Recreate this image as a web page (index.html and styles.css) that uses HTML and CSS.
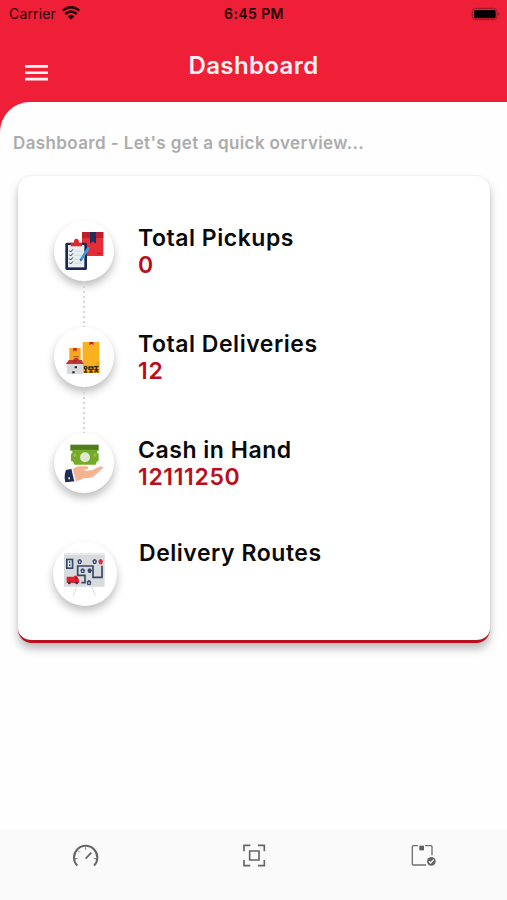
FILE: index.html
```html
<!DOCTYPE html>
<html lang="en">
<head>
<meta charset="utf-8">
<meta name="viewport" content="width=device-width, initial-scale=1">
<title>Dashboard</title>
<link rel="stylesheet" href="styles.css">
</head>
<body>
<header class="header">
  <div class="status">
    <div class="carrier"><span class="carrier-name">Carrier</span>
      <svg width="18" height="14" viewBox="0 0 54 42" fill="none" stroke="#250408" stroke-width="7.5"><path d="M2 14Q27-7 52 14M10 24Q27 9 44 24"/><path d="M17 31Q27 22 37 31L27 41Z" fill="#250408" stroke="none"/></svg>
    </div>
    <span class="time">6:45 PM</span>
    <svg class="battery" width="30" height="14" viewBox="0 0 90 42"><rect x="4" y="4" width="74" height="34" rx="10" fill="none" stroke="#9e1424" stroke-width="3"/><rect x="9" y="9" width="65" height="25" rx="5" fill="#080002"/><path d="M82 15q7 6 0 12z" fill="#9e1424"/></svg>
  </div>
  <div class="titlebar">
    <svg class="menu" width="23" height="16" viewBox="0 0 23 16" fill="#fff1f3"><path d="M0 0h23v2.7H0zM0 6.4h23v2.7H0zM0 12.8h23v2.7H0z"/></svg>
    <h1 class="title">Dashboard</h1>
  </div>
</header>
<main class="content">
  <p class="subtitle">Dashboard - Let's get a quick overview...</p>
  <section class="card">
    <div class="row">
      <div class="rail">
        <div class="disc"><svg viewBox="30 27 180 180">
          <path fill="#e52c37" d="M114 60h64v72h-64z"/><path fill="#b91f2c" d="M114 60h64v18h-64z"/><path fill="#252b5c" d="M138 60h18v35l-9-7-9 7z"/><path stroke="#9d2130" stroke-width="3" d="M159 124h13"/>
          <rect x="64" y="92" width="65" height="82" rx="5" fill="#1c2750"/><path fill="#e8edf0" d="M72 99h49v67H72z"/>
          <path fill="#e3262f" d="M80 103V92h10q-1-12 7-12t8 12h9v11z"/>
          <path d="m76 116 4 4 7-8m-11 16 4 4 7-8m-11 16 4 4 7-8m-11 16 4 4 7-8" fill="none" stroke="#28345c" stroke-width="3"/><path d="M91 118h22M91 130h22M91 142h18M91 154h22" stroke="#c7cdd1" stroke-width="2"/>
          <path d="m111 143 22-34" stroke="#3c9be0" stroke-width="8" stroke-linecap="round"/><path d="m108 149 1-9 5 3z" fill="#526577"/>
        </svg></div>
        <i class="dots"></i>
      </div>
      <div class="info"><h2 class="label">Total Pickups</h2><p class="value">0</p></div>
    </div>
    <div class="row">
      <div class="rail">
        <div class="disc"><svg viewBox="30 27 180 180">
          <path fill="#fbb022" d="M116 72h50v93h-50z"/><path fill="#f2a012" d="m166 128-38 37h38z"/><path fill="#c8202b" d="M136 72h12v9l-6-3-6 3z"/>
          <path fill="#f9a51d" d="M76 90h34v38H76z"/><path fill="#c8202b" d="M88 90h10v11l-5-4-5 4z"/><path stroke="#8b5a20" stroke-width="3" d="M88 116h16"/>
          <path fill="#d6dadd" d="M69 137h47v31H69z"/><path fill="#c83230" d="m65 138 10-12h12l5-6h9l4 6h8l6 12z"/><path fill="#a92b2d" d="M88 126h10v8H88z"/>
          <path fill="#252528" d="M92 145h7v6h-7zM85 160h7v6h-7z"/>
          <g fill="none" stroke="#322711" stroke-width="4"><circle cx="125" cy="149" r="4"/><path d="M125 153v9m-5 0h10m5-15h12v7h-12zm6 7v8m-5 0h10m4-16h14m-7 0v7m-6 2h12m-11 8q5-8 11 0"/></g>
        </svg></div>
        <i class="dots"></i>
      </div>
      <div class="info"><h2 class="label">Total Deliveries</h2><p class="value">12</p></div>
    </div>
    <div class="row">
      <div class="rail">
        <div class="disc"><svg viewBox="30 27 180 180">
          <path fill="#4d7d1d" d="M79 62h85v18H79z"/><path fill="#75aa29" d="M85 77h74v9q1 3 5 3v22q-7 1-9 11H91q-2-10-10-11V89q4 0 4-3z"/><circle cx="123" cy="100" r="15" fill="#dce9ce"/><path fill="#93bd55" d="m92 88 6 6-6 6-5-6zm61 0 5 6-5 6-6-6z"/>
          <path fill="#f4b393" d="M83 139q12-13 25-12h20q8 2 3 8-4 3-17 4 12 5 27 1l25-12q8-2 12 1-2 6-14 15l-14 13q-7 5-17 5-16-1-27 7l-15 4z"/><path d="M113 139q17 6 29 0" stroke="#dfa080" stroke-width="2" fill="none"/>
          <path fill="#1e2d55" d="m66 138 18-4 9 38-29 3q-5-19 2-37z"/><path fill="#f0f3f8" d="m82 134 4-1 10 38-5 2z"/><path fill="#e7edf2" d="M73 160h5v6h-5z"/>
        </svg></div>
      </div>
      <div class="info"><h2 class="label">Cash in Hand</h2><p class="value">12111250</p></div>
    </div>
    <div class="row row-routes">
      <div class="rail">
        <div class="disc disc-large"><svg viewBox="27 24 192 192">
          <path d="m99 157-11 29m55-29 11 29" stroke="#d9dddf" stroke-width="3"/><path fill="#d7dbde" d="M60 58h122v100H60z"/><path fill="#e8eaec" d="M60 58h122v5H60z"/>
          <path d="M101 94v30h22v22h-11m-10-50h45v34h27V95" fill="none" stroke="#3a4868" stroke-width="5"/>
          <path fill="#35466a" d="M66 74h22v31H66z"/><path fill="#e9eef3" d="M71 79h12v21H71z"/><path fill="#35466a" d="M75 82h4v5h-4zm0 9h4v5h-4z"/>
          <g fill="#35466a"><path d="M100 81q7-12 14 0l-3 9h-8zM145 81q7-12 14 0l-3 9h-8zM109 109q7-12 14 0l-2 8h-9zM130 109q7-12 14 0l-4 8h-6zM128 144q7-12 14 0l-2 9h-10z"/></g>
          <path fill="#df2d39" d="M163 81q7-12 14 0l-3 10h-8z"/><g fill="#cbd4dd"><path d="M105 80h4v6h-4zM150 80h4v6h-4zM114 109h4v5h-4zM133 144h4v6h-4z"/></g>
          <path fill="#df202d" d="M68 128h22v-3h8q6 7 7 14v8H68z"/><path fill="#8b2836" d="M93 130h5l3 7h-8z"/><g fill="#263557"><circle cx="76" cy="147" r="4"/><circle cx="98" cy="147" r="4"/></g>
        </svg></div>
      </div>
      <div class="info"><h2 class="label">Delivery Routes</h2></div>
    </div>
  </section>
</main>
<nav class="nav">
  <a class="tab"><svg width="50" height="40" viewBox="0 0 150 120" fill="none" stroke="#646464"><path stroke-width="6" d="M52 92A35 35 0 1 1 102 92"/><path stroke-width="5" d="m77 71 17-18"/><path stroke-width="3" stroke="#777" d="M77 37v7M54 47l5 5M45 71h8M101 71h8"/></svg></a>
  <a class="tab"><svg width="50" height="40" viewBox="-3 0 150 120" fill="none" stroke="#666" stroke-width="5"><path d="M42 49V31h19M84 31h19v18M42 75v17h19M84 92h19V75"/><path d="M59 48h28v27H59z"/></svg></a>
  <a class="tab"><svg width="50" height="40" viewBox="-5 0 150 120" fill="none" stroke="#717171" stroke-width="4"><path d="M55 32H41q-3 0-3 3v52q0 3 3 3h38M76 32h18q3 0 3 3v26"/><path fill="#606060" stroke="none" d="M59 32h14v14H59z"/><circle cx="95" cy="79" r="13" fill="#646464" stroke="none"/><path stroke="#fafafa" stroke-width="4" d="m88 79 5 5 9-10"/></svg></a>
</nav>
</body>
</html>
```
FILE: styles.css
```css
* { box-sizing: border-box; }
body {
  margin: 0;
  height: 900px;
  display: flex;
  flex-direction: column;
  overflow: hidden;
  background: #ef1f38;
  font-family: Inter, "Liberation Sans", sans-serif;
}
h1, h2, p { margin: 0; }
svg { display: block; flex: none; }

.header { height: 102px; }
.status {
  height: 28px;
  padding: 0 6px 0 9px;
  display: grid;
  grid-template-columns: 1fr auto 1fr;
  align-items: center;
  color: #250408;
  font-size: 14px;
  line-height: 28px;
}
.carrier { display: flex; align-items: center; gap: 6px; }
.carrier-name { letter-spacing: 0.15px; }
.carrier svg { margin-top: -3px; }
.time { margin-right: 2px; font-weight: 600; letter-spacing: 0.4px; }
.battery { justify-self: end; margin-top: -1px; }
.titlebar {
  height: 74px;
  padding: 0 25px;
  display: grid;
  grid-template-columns: 1fr auto 1fr;
}
.menu { margin-top: 37px; }
.title {
  margin-top: 22px;
  color: #fff1f3;
  font-size: 24px;
  line-height: 32px;
  font-weight: 600;
  letter-spacing: 0.4px;
}

.content {
  flex: 1;
  padding: 30px 17px 0 18px;
  background: #fefefe;
  border-top-left-radius: 30px;
}
.subtitle {
  margin-left: -5px;
  color: #acacac;
  font-size: 17px;
  line-height: 22px;
  font-weight: 600;
  letter-spacing: 0.38px;
  white-space: nowrap;
}
.card {
  height: 467px;
  margin-top: 22px;
  padding: 45px 35px 0 36px;
  background: #fff;
  border-bottom: 3px solid #b90e20;
  border-radius: 14px;
  box-shadow: 0 6px 9px rgba(0, 0, 0, 0.26), 0 0 2px rgba(0, 0, 0, 0.12);
}
.row { height: 106px; display: flex; gap: 24px; }
.rail { width: 60px; display: flex; flex-direction: column; align-items: center; }
.disc {
  width: 60px;
  height: 60px;
  flex: none;
  border-radius: 50%;
  background: #fff;
  box-shadow: 0 5px 8px rgba(0, 0, 0, 0.26);
}
.disc-large { width: 64px; height: 64px; margin-left: 2px; }
.dots {
  width: 2px;
  flex: 1;
  background: repeating-linear-gradient(#d4d4d4 0 2px, transparent 2px 5px);
}
.label {
  margin-top: 3px;
  color: #090909;
  font-size: 23px;
  line-height: 28px;
  font-weight: 600;
  letter-spacing: 0.53px;
  white-space: nowrap;
}
.value {
  color: #b90e20;
  font-size: 23px;
  line-height: 27px;
  font-weight: 600;
  letter-spacing: 0.65px;
}
.row-routes { padding-top: 3px; }
.row-routes .label { margin: -3px 0 0 1px; }

.nav {
  height: 70px;
  padding-top: 5px;
  display: grid;
  grid-template-columns: repeat(3, 1fr);
  justify-items: center;
  background: #fafafa;
}
```
